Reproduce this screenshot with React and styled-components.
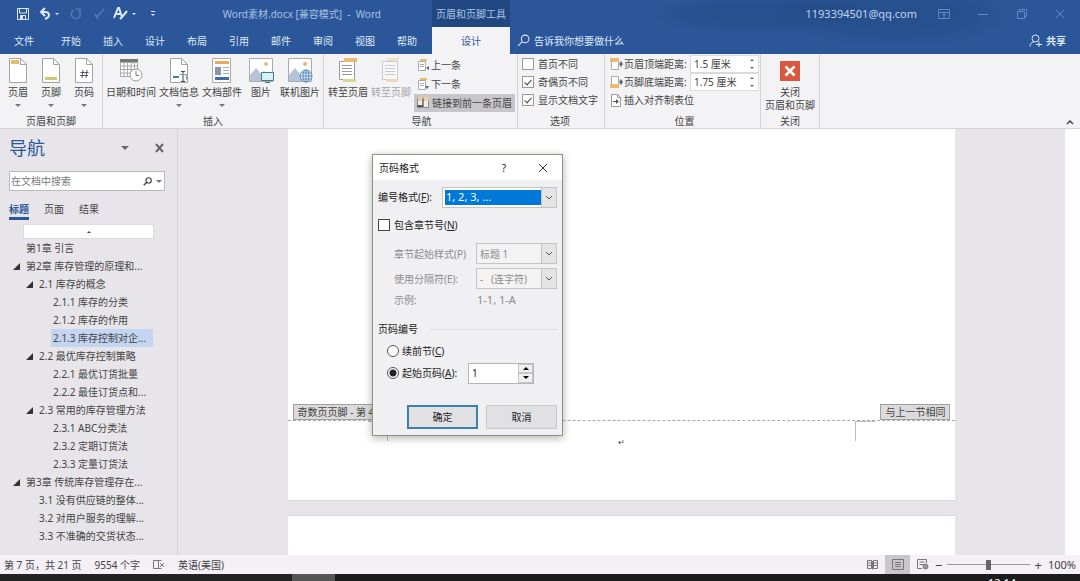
// App.jsx
import React, { useState } from "react";
import styled, { createGlobalStyle, css } from "styled-components";

const BLUE = "#2b579a";
const DARK_BLUE = "#20477f";
const RIBBON = "#f3f2f5";
const PANE = "#e7e5e9";
const LINE = "#d5d3d7";
const TEXT = "#444";
const FONT = '"Noto Sans", "Noto Sans CJK SC", sans-serif';

const GlobalStyle = createGlobalStyle`
  *, *::before, *::after { box-sizing: border-box; }
  body {
    margin: 0;
    font-family: ${FONT};
    font-size: 10px;
    line-height: 14px;
    color: ${TEXT};
    overflow: hidden;
  }
  button, input, select { font: inherit; color: inherit; margin: 0; padding: 0; border: 0; background: none; }
  button { white-space: nowrap; }
  ul { list-style: none; margin: 0; padding: 0; }
  svg { display: block; flex: none; }
`;

const Window = styled.div`
  display: flex;
  flex-direction: column;
  height: 100vh;
  background: ${RIBBON};
`;

/* ---------- header ---------- */

const Header = styled.header`
  display: grid;
  grid-template-columns: auto auto 1fr;
  grid-template-rows: 27px 27px;
  color: #dfe9f7;
  background:
    radial-gradient(ellipse 110px 20px at 70% 14px, ${DARK_BLUE}77 50%, transparent),
    radial-gradient(ellipse 120px 34px at 83% 14px, ${DARK_BLUE}77 50%, transparent),
    ${BLUE};
`;

const TitleArea = styled.div`
  display: flex;
  align-items: center;
  justify-content: space-between;
  padding: 0 51px 0 17px;
`;

const QuickAccess = styled.div`
  display: flex;
  align-items: center;
  gap: 7px;
`;

const IconButton = styled.button`
  display: flex;
  align-items: center;
  color: ${(p) => (p.$dim ? "#5079b5" : "inherit")};
`;

const DocTitle = styled.h1`
  margin: 0;
  font-size: 10px;
  font-weight: 400;
  color: #a9c0e2;
  white-space: pre;
`;

const ContextTitle = styled.div`
  display: flex;
  align-items: center;
  justify-content: center;
  padding: 0 4px;
  background: ${DARK_BLUE};
  color: #a9c3e8;
`;

const AccountArea = styled.div`
  display: flex;
  align-items: center;
  justify-content: flex-end;
  gap: 21px;
  padding-right: 14px;
`;

const WindowButtons = styled.div`
  display: flex;
  align-items: center;
  gap: 26px;
  color: #6389c2;
`;

const Account = styled.span`
  font-size: 11px;
  color: #c3d4ec;
`;

const TabRow = styled.nav`
  display: flex;
  padding-right: 4px;
`;

const Tab = styled.button`
  padding: ${(p) => (p.$file ? "0 16px 0 14px" : "0 11px")};

  ${(p) =>
    p.$active &&
    css`
      padding: 0 29px;
      background: ${RIBBON};
      color: ${BLUE};
    `}
`;

const TellRow = styled.div`
  display: flex;
  align-items: center;
  justify-content: space-between;
  padding: 0 14px 0 7px;
`;

const TextButton = styled.button`
  display: flex;
  align-items: center;
  gap: 4px;
  font-weight: ${(p) => (p.$bold ? 700 : 400)};
`;

/* ---------- ribbon ---------- */

const Ribbon = styled.section`
  display: flex;
  min-height: 75px;
  border-bottom: 1px solid ${LINE};
`;

const Group = styled.div`
  display: flex;
  flex-direction: column;
  justify-content: space-between;
  padding: ${(p) => p.$pad || "2px 3px 0"};
  border-right: 1px solid ${LINE};
`;

const GroupName = styled.div`
  text-align: center;
`;

const GroupBody = styled.div`
  display: flex;
  gap: ${(p) => p.$gap || 0}px;
`;

const BigButton = styled.button`
  display: flex;
  flex-direction: column;
  align-items: center;
  gap: 2px;
  padding: 2px ${(p) => p.$side || 0}px 0;
  opacity: ${(p) => (p.$dim ? 0.45 : 1)};
`;

const Caret = styled.span`
  border: 3px solid transparent;
  border-top-color: #777;
  border-bottom: 0;
  margin-top: ${(p) => (p.$below ? 3 : 0)}px;
`;

const Stack = styled.div`
  display: flex;
  flex-direction: column;
  gap: ${(p) => p.$gap || 0}px;
`;

const SmallButton = styled.button`
  display: flex;
  align-items: center;
  gap: 2px;
  height: 18px;
  padding: 0 3px;
  background: ${(p) => (p.$on ? "#c8c6ca" : "transparent")};
`;

const CheckLabel = styled.label`
  display: flex;
  align-items: center;
  gap: 4px;
  min-height: 18px;
`;

const CheckBox = styled.input.attrs({ type: "checkbox" })`
  appearance: none;
  display: grid;
  place-items: center;
  width: 12px;
  height: 12px;
  border: 1px solid ${(p) => (p.$dark ? "#444" : "#999")};
  background: #fff;

  &:checked::after {
    content: "";
    width: 4px;
    height: 7px;
    border: solid #444;
    border-width: 0 1px 1px 0;
    transform: translateY(-1px) rotate(42deg);
  }
`;

const MeasureRow = styled.div`
  display: flex;
  align-items: center;
  gap: 1px;
  height: 18px;
`;

const MeasureLabel = styled.label`
  flex: none;
  width: 65px;
`;

const Spin = styled.div`
  display: flex;
  align-items: stretch;
  width: ${(p) => p.$w}px;
  height: ${(p) => p.$h}px;
  border: 1px solid ${(p) => p.$border || "#dcdadd"};
  background: #fff;

  input {
    flex: 1;
    min-width: 0;
    padding-left: 3px;
  }
`;

const SpinButtons = styled.div`
  display: flex;
  flex-direction: column;
  width: ${(p) => (p.$boxed ? 15 : 12)}px;
  color: #666;

  button {
    flex: 1;
    display: grid;
    place-items: center;
    ${(p) => p.$boxed && "border: 1px solid #c6c6c6; background: #f0f0f0; color: #000;"}
  }
`;

const CloseButton = styled.button`
  display: flex;
  flex-direction: column;
  align-items: center;
  line-height: 13px;

  svg { margin: 5px 0 5px; }
`;

const Collapse = styled.button`
  margin: auto 6px 3px auto;
`;

/* ---------- body ---------- */

const Body = styled.div`
  flex: 1;
  min-height: 0;
  display: flex;
  background: ${PANE};
`;

const Pane = styled.aside`
  width: 178px;
  flex: none;
  padding: 6px 12px 0 9px;
  border-right: 1px solid ${LINE};
`;

const PaneHead = styled.div`
  display: flex;
  align-items: center;
  gap: 25px;

  h2 {
    flex: 1;
    margin: 0;
    font-size: 18px;
    line-height: 26px;
    font-weight: 400;
    color: ${BLUE};
  }
`;

const SearchBox = styled.div`
  display: flex;
  align-items: center;
  gap: 4px;
  height: 20px;
  margin-top: 10px;
  padding: 0 2px 0 1px;
  background: #fff;
  border: 1px solid #bbb;

  input {
    flex: 1;
    min-width: 0;
  }
  input::placeholder { color: #777; opacity: 1; }
`;

const PaneTabs = styled.div`
  display: flex;
  gap: 15px;
  margin-top: 9px;
`;

const PaneTab = styled.button`
  height: 20px;
  border-bottom: 3px solid ${(p) => (p.$active ? BLUE : "transparent")};
  color: ${(p) => (p.$active ? BLUE : "inherit")};
  font-weight: ${(p) => (p.$active ? 700 : 400)};
`;

const TreeTop = styled.button`
  display: grid;
  place-items: center;
  width: 131px;
  height: 15px;
  margin: 4px 0 0 14px;
  background: #fff;
  border: 1px solid #dcdcdc;
`;

const Tree = styled.ul`
  padding-right: 12px;
`;

const TreeItem = styled.li`
  display: flex;
  align-items: center;
  height: 18px;
  padding-left: ${(p) => [4, 17, 31][p.$level]}px;
`;

const Twist = styled.span`
  width: 11px;
  flex: none;
`;

const TreeLink = styled.a`
  flex: ${(p) => (p.$selected ? 1 : "none")};
  height: 18px;
  line-height: 18px;
  padding-left: 2px;
  color: inherit;
  text-decoration: none;
  white-space: nowrap;
  background: ${(p) => (p.$selected ? "#c3d5f0" : "transparent")};
`;

const Canvas = styled.main`
  flex: 1;
  min-width: 0;
  display: flex;
  flex-direction: column;
  align-items: center;
  gap: 14px;
`;

const Page = styled.div`
  display: flex;
  flex-direction: column;
  width: 75.3%;
  flex: ${(p) => (p.$first ? 1 : "0 0 40px")};
  background: #fff;
  border: solid #d8d6da;
  border-width: ${(p) => (p.$first ? "0 0 1px" : "1px 0 0")};
`;

const FooterTags = styled.div`
  display: flex;
  justify-content: space-between;
  margin-top: auto;
  padding: 0 5px;
  border-bottom: 1px dashed #aaa;
`;

const FooterTag = styled.span`
  padding: 0 4px;
  border: 1px solid #a0a0a0;
  background: #dcdadd;
  line-height: 14px;
`;

const FooterArea = styled.div`
  display: flex;
  justify-content: space-between;
  height: 79px;
  padding: 0 80px;
`;

const Corner = styled.span`
  width: 20px;
  height: 20px;
  border: solid #bbb;
  border-width: ${(p) => (p.$right ? "1px 0 0 1px" : "1px 1px 0 0")};
`;

const Mark = styled.span`
  margin-top: 14px;
  font-size: 8px;
`;

const ScrollTrack = styled.div`
  width: 15px;
  background: #fdfcfe;
`;

/* ---------- dialog ---------- */

const Dialog = styled.form`
  position: absolute;
  left: 372px;
  top: 154px;
  width: 191px;
  background: #f0eff1;
  border: 1px solid #8b9183;
  box-shadow: 0 2px 8px rgba(60, 70, 40, 0.4);
  color: #222;
`;

const DialogHead = styled.div`
  display: flex;
  align-items: center;
  gap: 32px;
  height: 25px;
  padding: 0 14px 0 6px;
  background: #fff;

  h2 {
    flex: 1;
    margin: 0;
    font-size: 10px;
    font-weight: 400;
  }
`;

const DialogBody = styled.div`
  display: flex;
  flex-direction: column;
  padding: 6px 5px;
`;

const Field = styled.div`
  display: flex;
  align-items: center;
  justify-content: space-between;
  height: ${(p) => p.$h || 25}px;
  padding-left: ${(p) => (p.$indent ? 16 : 0)}px;
  color: ${(p) => (p.$indent ? "#8c8c8c" : "inherit")};
`;

const SelectBox = styled.div`
  display: flex;
  align-items: center;
  position: relative;
  width: ${(p) => p.$w}px;
  height: 21px;
  padding: 2px;
  border: 1px solid #c4c4c4;
  background: ${(p) => (p.$focus ? "#fff" : "#f3f3f3")};

  select {
    appearance: none;
    width: 100%;
    height: 15px;
    padding: 0 0 0 1px;
    outline: 0;
    font-size: ${(p) => (p.$focus ? 11 : 10)}px;
    color: ${(p) => (p.$focus ? "#fff" : "#8c8c8c")};
    background: ${(p) => (p.$focus ? "#0078d7" : "transparent")};
    opacity: 1;
  }
`;

const SelectArrow = styled.span`
  position: absolute;
  right: 0;
  top: 0;
  bottom: 0;
  width: 15px;
  display: grid;
  place-items: center;
  border-left: 1px solid #c4c4c4;
  background: #e4e4e4;
  color: #555;
  pointer-events: none;
`;

const Example = styled.span`
  width: 80px;
  font-size: 11px;
`;

const Legend = styled.div`
  display: flex;
  align-items: center;
  gap: 12px;
  margin-top: 9px;
  height: 22px;

  &::after {
    content: "";
    flex: 1;
    border-top: 1px solid #dcdcdc;
  }
`;

const RadioRow = styled.div`
  display: flex;
  align-items: center;
  height: 22px;
  padding-left: 9px;
  gap: 11px;
`;

const RadioLabel = styled.label`
  display: flex;
  align-items: center;
  gap: 3px;
`;

const Radio = styled.input.attrs({ type: "radio" })`
  appearance: none;
  width: 12px;
  height: 12px;
  border: 1px solid #555;
  border-radius: 50%;
  background: #fff;

  &:checked {
    background: radial-gradient(circle, #222 3px, #fff 4px);
  }
`;

const Actions = styled.div`
  display: flex;
  justify-content: flex-end;
  gap: 8px;
  margin-top: 21px;
`;

const ActionButton = styled.button`
  width: 71px;
  height: 24px;
  background: #e1e1e3;
  border: ${(p) => (p.$primary ? "2px solid #3c7fb1" : "1px solid #c9c9c9")};
`;

/* ---------- status bar ---------- */

const Status = styled.footer`
  display: flex;
  align-items: center;
  height: 19px;
  padding: 0 4px;
  gap: 13px;
  background: #f4f0f5;
  white-space: nowrap;
`;

const StatusRight = styled.div`
  display: flex;
  align-items: center;
  margin-left: auto;
  height: 100%;
`;

const ViewButton = styled.button`
  display: grid;
  place-items: center;
  width: 25px;
  height: 100%;
  background: ${(p) => (p.$active ? "#c9c7cb" : "transparent")};
`;

const Zoom = styled.input.attrs({ type: "range" })`
  appearance: none;
  width: 83px;
  height: 11px;
  margin: 0 5px 0 4px;
  background: linear-gradient(#999, #999) center / 100% 1px no-repeat;

  &::-webkit-slider-thumb {
    appearance: none;
    width: 5px;
    height: 10px;
    background: #666;
  }
`;

const ZoomStep = styled.button`
  font-size: 13px;
`;

const ZoomValue = styled.output`
  margin-left: 6px;
  font-size: 11px;
`;

const TaskBar = styled.div`
  display: flex;
  justify-content: flex-end;
  flex: none;
  height: 7px;
  padding-right: 64px;
  overflow: hidden;
  color: #fff;
  background: linear-gradient(90deg, #222 27%, #555 27%, #555 31%, #1c1c1c 31%);
`;

const Clock = styled.span`
  padding-top: 2px;
  font-size: 11px;
`;

/* ---------- icons ---------- */

const Svg = ({ w, h = w, children, ...rest }) => (
  <svg width={w} height={h} viewBox={`0 0 ${w} ${h}`} fill="none" stroke="currentColor" aria-hidden="true" {...rest}>
    {children}
  </svg>
);

const Sheet = ({ children, w = 26 }) => (
  <Svg w={w} h={25} stroke="#a3a3a3">
    <g transform={`translate(${(w - 18) / 2} 0)`}>
      <path d="M.5.5h11l6 6v18H.5z" fill="#fff" />
      <path d="M11.5.5v6h6" />
      {children}
    </g>
  </Svg>
);

const Picture = ({ children }) => (
  <Svg w={26} h={25}>
    <path d="M1.500.5h23v23h-23z" fill="#fff" stroke="#aaa" />
    <path d="M2 23v-6l6-7 5 6 3-3 5 5v5z" fill="#b5c4d8" stroke="none" />
    <circle cx="18" cy="6" r="2" fill="#eab676" stroke="none" />
    {children}
  </Svg>
);

const GoTo = ({ bottom }) => (
  <Svg w={22} h={25} stroke="#9a9a9a">
    <path d="M2.500 3.500h15v18h-15z" fill="#fff" />
    <path d="M5 7.500h10M5 10.500h10M5 13.500h10M5 16.500h10" />
    <path d={bottom ? "M6 21h12v3H6z" : "M7 0h13v4H7z"} fill="#e8bb70" stroke="none" />
    <path d={bottom ? "M7 0h12v3H7z" : "M6 21h13v3H6z"} fill="#dbd695" stroke="none" />
  </Svg>
);

const NavIcon = ({ down }) => (
  <Svg w={12} h={12} stroke="#aaa">
    <path d="M1.500 2.500h7v9h-7z" fill="#fff" />
    <path d="M3 5.500h4M3 7.500h4" />
    <path d="M3 0h7v2H3z" fill="#e8bb70" stroke="none" />
    <path d={down ? "M8 8h4l-2 3z" : "M12 7v4L9 9z"} fill="#47709f" stroke="none" />
  </Svg>
);

const MarginIcon = ({ bottom }) => (
  <Svg w={13} h={12} stroke="#aaa">
    <path d="M1.500.5h7v11h-7z" fill="#fff" />
    <path d={bottom ? "M0 8h9v4H0z" : "M0 0h9v4H0z"} fill="#e8bb70" stroke="none" />
    <path d="M11 3l2 3-2 3-2-3z" fill="#667" stroke="none" />
  </Svg>
);

const Chevron = ({ up, w = 8 }) => (
  <Svg w={w} h={5}>
    <path d={up ? "M1 4l3-3 3 3" : "M1 1l3 3 3-3"} strokeWidth={up ? 1.500 : 1} />
  </Svg>
);

const Arrow = ({ up }) => (
  <Svg w={6} h={3} stroke="none">
    <path d={up ? "M0 3l3-3 3 3z" : "M0 0l3 3 3-3z"} fill="currentColor" />
  </Svg>
);

const SmallArrow = ({ up }) => (
  <Svg w={4} h={2} stroke="none">
    <path d={up ? "M0 2l2-2 2 2z" : "M0 0l2 2 2-2z"} fill="currentColor" />
  </Svg>
);

const Search = ({ bold, size = 12 }) => (
  <svg width={size} height={size} viewBox="0 0 12 12" fill="none" stroke="currentColor" aria-hidden="true">
    <circle cx="7.500" cy="4.500" r="3.500" strokeWidth={bold ? 1.500 : 1} />
    <path d="M5 7L1 11" strokeWidth={bold ? 2 : 1} />
  </svg>
);

/* ---------- data ---------- */

const TABS = ["文件", "开始", "插入", "设计", "布局", "引用", "邮件", "审阅", "视图", "帮助"];

const HEADINGS = [
  { level: 0, text: "第1章 引言" },
  { level: 0, text: "第2章 库存管理的原理和...", open: true },
  { level: 1, text: "2.1 库存的概念", open: true },
  { level: 2, text: "2.1.1 库存的分类" },
  { level: 2, text: "2.1.2 库存的作用" },
  { level: 2, text: "2.1.3 库存控制对企...", selected: true },
  { level: 1, text: "2.2 最优库存控制策略", open: true },
  { level: 2, text: "2.2.1 最优订货批量" },
  { level: 2, text: "2.2.2 最佳订货点和..." },
  { level: 1, text: "2.3 常用的库存管理方法", open: true },
  { level: 2, text: "2.3.1 ABC分类法" },
  { level: 2, text: "2.3.2 定期订货法" },
  { level: 2, text: "2.3.3 定量订货法" },
  { level: 0, text: "第3章 传统库存管理存在...", open: true },
  { level: 1, text: "3.1 没有供应链的整体..." },
  { level: 1, text: "3.2 对用户服务的理解..." },
  { level: 1, text: "3.3 不准确的交货状态..." },
];

function TitleBar() {
  return (
    <Header>
      <TitleArea>
        <QuickAccess>
          <IconButton aria-label="保存">
            <Svg w={12} h={12}>
              <path d="M.5.5h11v11H.5z" />
              <path d="M2.500 1v4h7V1M3.500 11.500v-4h5v4" />
              <path d="M4 8h2v3H4z" fill="currentColor" stroke="none" />
            </Svg>
          </IconButton>
          <IconButton aria-label="撤消">
            <Svg w={24} h={13} strokeWidth="2">
              <path d="M9 12c3-1 4-2 4-4s-1-3-4-3H6" />
              <path d="M9 1L5 5l4 4" />
              <path d="M19 6h4l-2 2z" fill="currentColor" stroke="none" />
            </Svg>
          </IconButton>
          <IconButton $dim aria-label="恢复">
            <Svg w={18} h={12} strokeWidth="1.500">
              <path d="M7 2a4.500 4.500 0 1 0 5 1M9 1h4v4" />
            </Svg>
          </IconButton>
          <IconButton $dim aria-label="格式刷">
            <Svg w={14} h={12}>
              <path d="M12 1L4 10M3 6l3 5" strokeWidth="1.500" />
            </Svg>
          </IconButton>
          <IconButton aria-label="样式">
            <Svg w={24} h={13} strokeWidth="2">
              <path d="M1 11L5 1h1l3 9M3 7h5" />
              <path d="M14 4l-5 6-2 2" />
              <path d="M19 6h4l-2 2z" fill="currentColor" stroke="none" />
            </Svg>
          </IconButton>
          <IconButton aria-label="自定义快速访问工具栏">
            <Svg w={16} h={8}>
              <path d="M7 1.500h4" />
              <path d="M7 4h4l-2 2z" fill="currentColor" stroke="none" />
            </Svg>
          </IconButton>
        </QuickAccess>
        <DocTitle>Word素材.docx [兼容模式]  -  Word</DocTitle>
      </TitleArea>
      <ContextTitle>页眉和页脚工具</ContextTitle>
      <AccountArea>
        <Account>1193394501@qq.com</Account>
        <WindowButtons>
          <IconButton aria-label="功能区显示选项">
            <Svg w={12} h={10}>
              <path d="M.5.5h11v9H.5zM.5 3.500h11M6 8.500v-4M4 6.500l2-2 2 2" />
            </Svg>
          </IconButton>
          <IconButton aria-label="最小化">
            <Svg w={13} h={10}><path d="M2 5.500h10" /></Svg>
          </IconButton>
          <IconButton aria-label="还原">
            <Svg w={13} h={10}><path d="M2.500 2.500h7v7h-7zM4.500 2.500v-2h7v7h-2" /></Svg>
          </IconButton>
          <IconButton aria-label="关闭">
            <Svg w={12} h={10}><path d="M2 1l8 8M10 1l-8 8" /></Svg>
          </IconButton>
        </WindowButtons>
      </AccountArea>
      <TabRow>
        {TABS.map((t, i) => (
          <Tab key={t} $file={i === 0}>{t}</Tab>
        ))}
      </TabRow>
      <Tab $active>设计</Tab>
      <TellRow>
        <TextButton><Search size={13} />告诉我你想要做什么</TextButton>
        <TextButton $bold>
          <Svg w={13} h={13}>
            <circle cx="6.500" cy="4.500" r="3.500" />
            <path d="M1 12.500c0-3 2-4.500 4-4.500M7 10.500h6M10 7.500v5.500" />
          </Svg>
          共享
        </TextButton>
      </TellRow>
    </Header>
  );
}

function Measure({ id, label, value, bottom }) {
  return (
    <MeasureRow>
      <MarginIcon bottom={bottom} />
      <MeasureLabel htmlFor={id}>{label}</MeasureLabel>
      <Spin $w={69} $h={18}>
        <input id={id} defaultValue={value} />
        <SpinButtons>
          <button aria-label="增加"><SmallArrow up /></button>
          <button aria-label="减少"><SmallArrow /></button>
        </SpinButtons>
      </Spin>
    </MeasureRow>
  );
}

function RibbonBar() {
  return (
    <Ribbon>
      <Group $pad="2px 2px 0">
        <GroupBody $gap={1}>
          <BigButton $side={6}>
            <Sheet w={20}><path d="M2 2h8v4H2z" fill="#e8bb70" stroke="none" /></Sheet>
            页眉<Caret $below />
          </BigButton>
          <BigButton $side={6}>
            <Sheet w={20}><path d="M3 19h12v3H3z" fill="#c9cb78" stroke="none" /></Sheet>
            页脚<Caret $below />
          </BigButton>
          <BigButton $side={6}>
            <Sheet w={20}><path d="M8 12l-1 8M12 12l-1 8M5.500 14.500h8M5 17.500h8" stroke="#556" /></Sheet>
            页码<Caret $below />
          </BigButton>
        </GroupBody>
        <GroupName>页眉和页脚</GroupName>
      </Group>

      <Group>
        <GroupBody $gap={3}>
          <BigButton>
            <Svg w={24} h={25} stroke="#aaa">
              <path d="M1.500 4.500h17v14h-17z" fill="#fff" />
              <path d="M1.500 8h17M1.500 11.500h17M1.500 15h17M5 4v14M8.500 4v14M12 4v14M15.500 4v14" />
              <path d="M1 1h18v3H1z" fill="#777" stroke="none" />
              <circle cx="17" cy="17" r="6" fill="#fff" stroke="#999" />
              <path d="M17 13v4.500h3" stroke="#777" />
            </Svg>
            日期和时间
          </BigButton>
          <BigButton>
            <Sheet>
              <path d="M3 18h6v2H3z" fill="#4c8087" stroke="none" />
              <path d="M11 13.500h4M13 13.500v10M11 23.500h4" stroke="#444" />
              <path d="M9.500 16.500h7v5" stroke="#7f9dbb" />
            </Sheet>
            文档信息<Caret $below />
          </BigButton>
          <BigButton>
            <Svg w={20} h={25} stroke="#aaa">
              <path d="M.5.5h18v24H.5z" fill="#fff" />
              <path d="M3 3h14v3H3z" fill="#e8a95c" stroke="none" />
              <path d="M3 9h6v8H3z" fill="#8794ad" stroke="none" />
              <path d="M11 9.500h6M11 12.500h6M11 15.500h6" />
              <path d="M3 19h14v3H3z" fill="#4467a8" stroke="none" />
            </Svg>
            文档部件<Caret $below />
          </BigButton>
          <BigButton $side={3}>
            <Picture>
              <path d="M13.500 14.500h12v8h-12z" fill="#d8f3f7" stroke="#3e7e86" />
              <path d="M17 24.500h5" stroke="#3e7e86" />
            </Picture>
            图片
          </BigButton>
          <BigButton>
            <Picture>
              <circle cx="19" cy="18" r="6" fill="#e8f2fb" stroke="#5d8cbf" />
              <path d="M13 18h12M19 12v12M14.500 15h9M14.500 21h9" stroke="#5d8cbf" />
              <ellipse cx="19" cy="18" rx="3" ry="6" stroke="#5d8cbf" />
            </Picture>
            联机图片
          </BigButton>
        </GroupBody>
        <GroupName>插入</GroupName>
      </Group>

      <Group $pad="2px 2px 0 4px">
        <GroupBody $gap={3}>
          <BigButton><GoTo />转至页眉</BigButton>
          <BigButton $dim disabled><GoTo bottom />转至页脚</BigButton>
          <Stack $gap={1}>
            <SmallButton><NavIcon />上一条</SmallButton>
            <SmallButton><NavIcon down />下一条</SmallButton>
            <SmallButton $on>
              <Svg w={13} h={12} stroke="#888">
                <path d="M.5 1.500h5v9h-5zM6.500 1.500h5v9h-5z" fill="#eee" />
                <path d="M1 0h4v4H1zM7 0h5v4H7z" fill="#e8cf9d" stroke="none" />
                <path d="M0 9h6" stroke="#555" strokeWidth="2" />
              </Svg>
              链接到前一条页眉
            </SmallButton>
          </Stack>
        </GroupBody>
        <GroupName>导航</GroupName>
      </Group>

      <Group $pad="1px 6px 0 4px">
        <Stack>
          <CheckLabel><CheckBox />首页不同</CheckLabel>
          <CheckLabel><CheckBox defaultChecked />奇偶页不同</CheckLabel>
          <CheckLabel><CheckBox defaultChecked />显示文档文字</CheckLabel>
        </Stack>
        <GroupName>选项</GroupName>
      </Group>

      <Group $pad="1px 1px 0 5px">
        <Stack>
          <Measure id="top" label="页眉顶端距离:" value="1.5 厘米" />
          <Measure id="bottom" label="页脚底端距离:" value="1.75 厘米" bottom />
          <MeasureRow as="button">
            <Svg w={13} h={13} stroke="#999">
              <path d="M1.500.5h6l3 3v9h-9z" fill="#fff" />
              <path d="M7.500.5v3h3" />
              <path d="M3 7h3V5l3 2.500L6 10V8H3z" fill="#556" stroke="none" />
            </Svg>
            插入对齐制表位
          </MeasureRow>
        </Stack>
        <GroupName>位置</GroupName>
      </Group>

      <Group $pad="2px 4px 0">
        <CloseButton>
          <Svg w={20} h={20}>
            <path d="M0 0h20v20H0z" fill="#d9583f" stroke="none" />
            <path d="M5.500 5.500l9 9M14.500 5.500l-9 9" stroke="#fff" strokeWidth="2.500" />
          </Svg>
          <span>关闭</span>
          <span>页眉和页脚</span>
        </CloseButton>
        <GroupName>关闭</GroupName>
      </Group>

      <Collapse aria-label="折叠功能区"><Chevron up /></Collapse>
    </Ribbon>
  );
}

function NavigationPane() {
  return (
    <Pane>
      <PaneHead>
        <h2>导航</h2>
        <IconButton aria-label="任务窗格选项">
          <Svg w={8} h={4}><path d="M0 0h8L4 4z" fill="#666" stroke="none" /></Svg>
        </IconButton>
        <IconButton aria-label="关闭窗格">
          <Svg w={11} h={10} stroke="#666" strokeWidth="2"><path d="M2 1l7 8M9 1L2 9" /></Svg>
        </IconButton>
      </PaneHead>
      <SearchBox>
        <input aria-label="搜索" placeholder="在文档中搜索" />
        <Search size={9} bold />
        <Caret />
      </SearchBox>
      <PaneTabs>
        <PaneTab $active>标题</PaneTab>
        <PaneTab>页面</PaneTab>
        <PaneTab>结果</PaneTab>
      </PaneTabs>
      <TreeTop aria-label="跳到开头"><SmallArrow up /></TreeTop>
      <Tree>
        {HEADINGS.map((h) => (
          <TreeItem key={h.text} $level={h.level}>
            <Twist>
              {h.open && (
                <Svg w={7} h={7}><path d="M7 0v7H0z" fill="#333" stroke="none" /></Svg>
              )}
            </Twist>
            <TreeLink href="#" $selected={h.selected}>{h.text}</TreeLink>
          </TreeItem>
        ))}
      </Tree>
    </Pane>
  );
}

function PageNumberDialog() {
  const [mode, setMode] = useState("start");

  return (
    <Dialog role="dialog" aria-label="页码格式" onSubmit={(e) => e.preventDefault()}>
      <DialogHead>
        <h2>页码格式</h2>
        <button type="button" aria-label="帮助">?</button>
        <button type="button" aria-label="关闭">
          <Svg w={10} h={10} stroke="#333"><path d="M1 1l8 8M9 1L1 9" /></Svg>
        </button>
      </DialogHead>
      <DialogBody>
        <Field $h={22}>
          <label htmlFor="format">编号格式(<u>F</u>):</label>
          <SelectBox $w={115} $focus>
            <select id="format"><option>1, 2, 3, ...</option></select>
            <SelectArrow><Chevron /></SelectArrow>
          </SelectBox>
        </Field>
        <Field $h={33}>
          <CheckLabel><CheckBox $dark /><span>包含章节号(<u>N</u>)</span></CheckLabel>
        </Field>
        <Field $indent>
          <label htmlFor="style">章节起始样式(P)</label>
          <SelectBox $w={81}>
            <select id="style" disabled><option>标题 1</option></select>
            <SelectArrow><Chevron /></SelectArrow>
          </SelectBox>
        </Field>
        <Field $indent>
          <label htmlFor="sep">使用分隔符(E):</label>
          <SelectBox $w={81}>
            <select id="sep" disabled><option>-&nbsp;&nbsp; (连字符)</option></select>
            <SelectArrow><Chevron /></SelectArrow>
          </SelectBox>
        </Field>
        <Field $indent $h={18}>
          <span>示例:</span>
          <Example>1-1, 1-A</Example>
        </Field>
        <Legend>页码编号</Legend>
        <RadioRow>
          <RadioLabel>
            <Radio name="mode" checked={mode === "continue"} onChange={() => setMode("continue")} />
            <span>续前节(<u>C</u>)</span>
          </RadioLabel>
        </RadioRow>
        <RadioRow>
          <RadioLabel>
            <Radio name="mode" checked={mode === "start"} onChange={() => setMode("start")} />
            <span>起始页码(<u>A</u>):</span>
          </RadioLabel>
          <Spin $w={66} $h={21} $border="#b5b5b5">
            <input aria-label="起始页码" defaultValue="1" />
            <SpinButtons $boxed>
              <button type="button" aria-label="增加"><Arrow up /></button>
              <button type="button" aria-label="减少"><Arrow /></button>
            </SpinButtons>
          </Spin>
        </RadioRow>
        <Actions>
          <ActionButton $primary>确定</ActionButton>
          <ActionButton type="button">取消</ActionButton>
        </Actions>
      </DialogBody>
    </Dialog>
  );
}

function StatusBar() {
  return (
    <Status>
      <span>第 7 页，共 21 页</span>
      <span>9554 个字</span>
      <Svg w={12} h={11} stroke="#777">
        <path d="M5.500 1.500h-5v8h5zM5.500 1.500h3M5.500 9.500h3M7 4l4 4M11 4L7 8" />
      </Svg>
      <span>英语(美国)</span>
      <StatusRight>
        <ViewButton aria-label="阅读视图">
          <Svg w={11} h={10} stroke="#777">
            <path d="M5.500 1v8.500M.5.500h4v8h-4zM6.500.500h4v8h-4zM1 3h3M1 5.500h3M7 3h3M7 5.500h3" />
          </Svg>
        </ViewButton>
        <ViewButton $active aria-label="页面视图">
          <Svg w={12} h={11} stroke="#777">
            <path d="M.5.500h11v10H.5zM3 3.500h6M3 5.500h6M3 7.500h6" />
          </Svg>
        </ViewButton>
        <ViewButton aria-label="Web 版式视图">
          <Svg w={12} h={11} stroke="#777">
            <path d="M5 9.500H.5v-9h9V4M2.500 3h5M2.500 5.500h4" />
            <circle cx="8.500" cy="7.500" r="2.500" fill="#999" />
          </Svg>
        </ViewButton>
        <ZoomStep aria-label="缩小">−</ZoomStep>
        <Zoom aria-label="缩放" defaultValue="50" />
        <ZoomStep aria-label="放大">+</ZoomStep>
        <ZoomValue>100%</ZoomValue>
      </StatusRight>
    </Status>
  );
}

export default function App() {
  return (
    <Window>
      <GlobalStyle />
      <TitleBar />
      <RibbonBar />
      <Body>
        <NavigationPane />
        <Canvas>
          <Page $first>
            <FooterTags>
              <FooterTag>奇数页页脚 - 第 4 节 -</FooterTag>
              <FooterTag>与上一节相同</FooterTag>
            </FooterTags>
            <FooterArea>
              <Corner />
              <Mark>↵</Mark>
              <Corner $right />
            </FooterArea>
          </Page>
          <Page />
        </Canvas>
        <ScrollTrack />
      </Body>
      <StatusBar />
      <TaskBar><Clock>12:14</Clock></TaskBar>
      <PageNumberDialog />
    </Window>
  );
}
